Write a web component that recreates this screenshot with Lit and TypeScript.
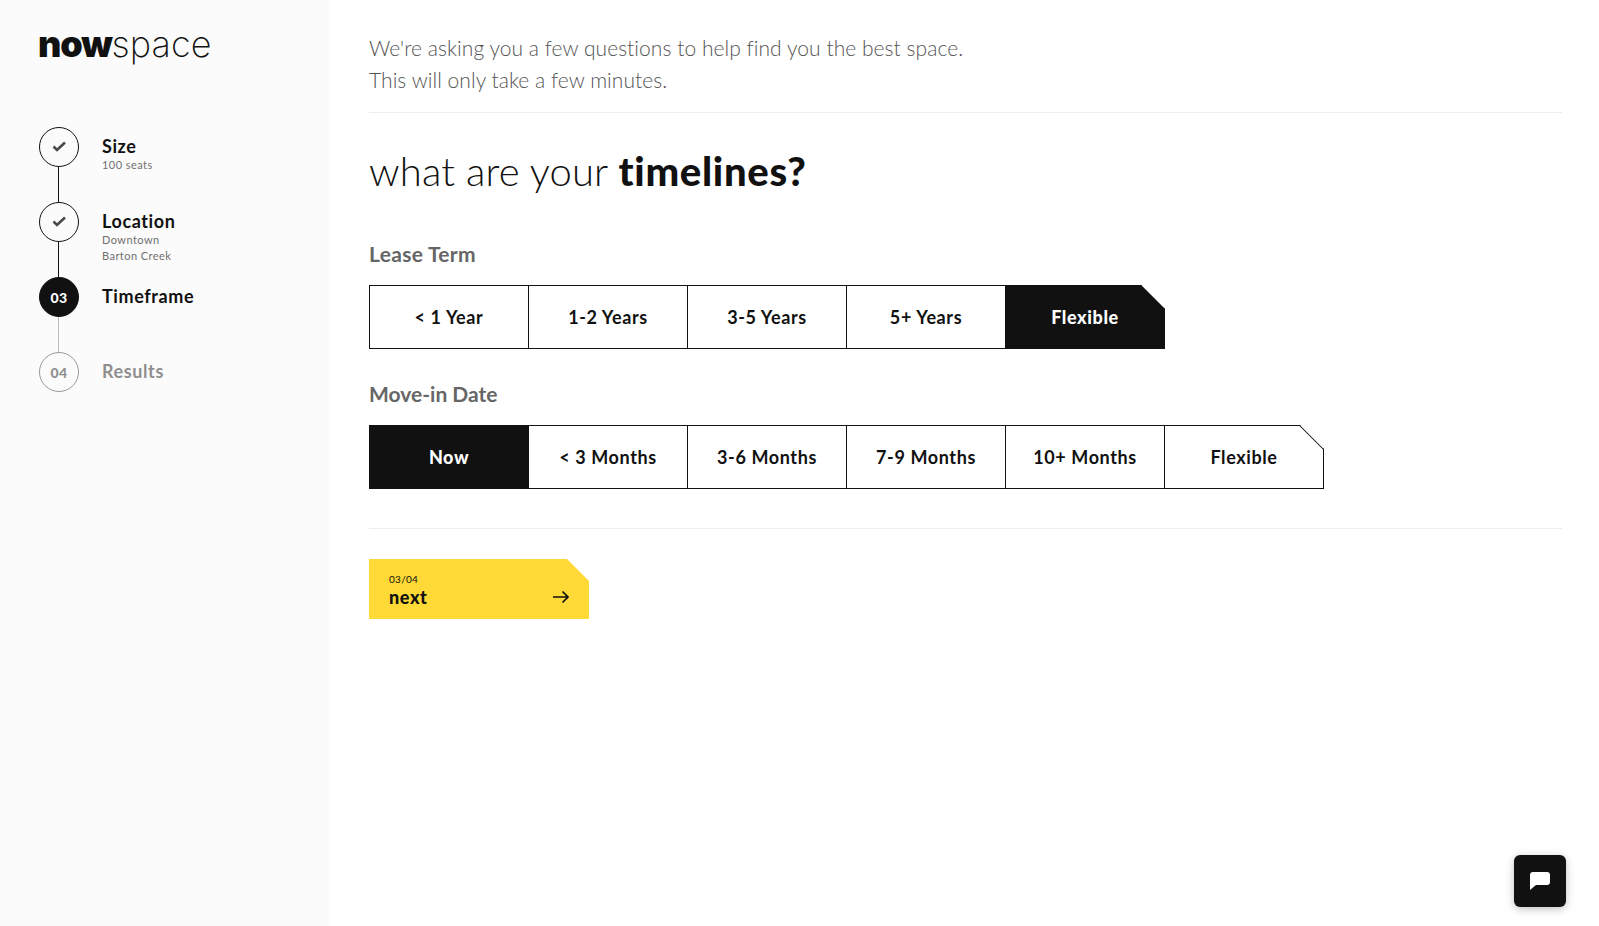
import { LitElement, html, css, svg } from 'lit';
import { customElement } from 'lit/decorators.js';
import { classMap } from 'lit/directives/class-map.js';

const lease = ['< 1 Year', '1-2 Years', '3-5 Years', '5+ Years', 'Flexible'];
const moveIn = ['Now', '< 3 Months', '3-6 Months', '7-9 Months', '10+ Months', 'Flexible'];

const check = svg`<path d="M4.500 9.500l3.500 3.500L16 5.500" fill="none" stroke="#4a4a4a" stroke-width="2.600"/>`;

@customElement('app-root')
export default class AppRoot extends LitElement {
  static override styles = css`
    :host {
      display: flex;
      height: 926px;
      overflow: hidden;
      background: #fff;
      color: #111;
      font-family: Lato, "Open Sans", sans-serif;
    }
    .sidebar {
      width: 329px;
      flex: none;
      box-sizing: border-box;
      background: #fbfbfb;
      padding: 21px 0 0 39px;
    }
    .logo {
      font-family: Inter, sans-serif;
      font-size: 36px;
      line-height: 46px;
      font-weight: 200;
      height: 46px;
      margin-left: -1px;
      letter-spacing: 0.1px;
      color: #111;
    }
    .logo b {
      font-weight: 900;
      letter-spacing: -1.200px;
    }
    .steps {
      margin-top: 60px;
    }
    .step {
      display: flex;
      height: 75px;
      gap: 23px;
      position: relative;
    }
    .step::before {
      content: '';
      position: absolute;
      left: 19px;
      top: 40px;
      height: 35px;
      width: 1px;
      background: #111;
    }
    .step.next::before {
      background: #bbb;
    }
    .step.last::before {
      display: none;
    }
    .dot {
      width: 40px;
      height: 40px;
      flex: none;
      box-sizing: border-box;
      border: 1px solid #111;
      border-radius: 50%;
      display: flex;
      align-items: center;
      justify-content: center;
      font-size: 14px;
      font-weight: 900;
      letter-spacing: 0.3px;
    }
    .dot svg {
      width: 20px;
      height: 20px;
    }
    .step.current .dot {
      background: #111;
      color: #fff;
    }
    .step.todo .dot {
      border-color: #999;
      color: #8f8f8f;
    }
    .step-title {
      font-size: 18px;
      line-height: 22px;
      font-weight: 700;
      margin-top: 8px;
      letter-spacing: 0.6px;
    }
    .step.todo .step-title {
      color: #8f8f8f;
    }
    .step-sub {
      font-size: 11px;
      line-height: 16px;
      color: #6f6f6f;
      letter-spacing: 0.45px;
    }
    .main {
      flex: 1;
      padding: 32px 37px 0 40px;
      min-width: 0;
    }
    .intro {
      font-size: 21px;
      line-height: 32px;
      font-weight: 300;
      color: #555;
      letter-spacing: 0.05px;
      padding-bottom: 16px;
      border-bottom: 1px solid #ececec;
    }
    h1 {
      margin: 32px 0 0;
      font-size: 40px;
      line-height: 52px;
      font-weight: 300;
      color: #111;
      letter-spacing: 0.15px;
    }
    h1 b {
      font-weight: 900;
      letter-spacing: 0.7px;
    }
    .label {
      margin-top: 43px;
      font-size: 21px;
      line-height: 28px;
      font-weight: 700;
      color: #666;
      letter-spacing: 0.3px;
    }
    .label.second {
      margin-top: 31px;
      letter-spacing: 0;
    }
    .options {
      display: flex;
      width: fit-content;
      margin-top: 17px;
      height: 64px;
      position: relative;
    }
    .opt {
      width: 159px;
      height: 64px;
      box-sizing: border-box;
      border: solid #111;
      border-width: 1px 1px 1px 0;
      display: flex;
      align-items: center;
      justify-content: center;
      font-size: 18px;
      font-weight: 700;
      background: #fff;
      letter-spacing: 0.6px;
    }
    .opt:first-child {
      width: 160px;
      border-left-width: 1px;
    }
    .opt.on {
      background: #111;
      color: #fff;
      font-weight: 900;
    }
    .opt.tip {
      clip-path: polygon(0 0, calc(100% - 24px) 0, 100% 24px, 100% 100%, 0 100%);
      position: relative;
    }
    .opt.tip::after {
      content: '';
      position: absolute;
      top: -1px;
      right: -1px;
      width: 34px;
      height: 1px;
      background: #111;
      transform-origin: right top;
      transform: translate(0, 24px) rotate(45deg);
    }
    .rule {
      height: 1px;
      background: #ececec;
      margin-top: 39px;
    }
    .next-btn {
      margin-top: 30px;
      width: 220px;
      height: 60px;
      box-sizing: border-box;
      padding: 14px 20px 0;
      background: #ffd935;
      clip-path: polygon(0 0, 198px 0, 100% 22px, 100% 100%, 0 100%);
    }
    .count {
      font-size: 10px;
      line-height: 13px;
      letter-spacing: 0.3px;
    }
    .next-row {
      display: flex;
      align-items: center;
      justify-content: space-between;
      font-size: 18px;
      line-height: 22px;
      font-weight: 900;
      letter-spacing: 0.6px;
    }
    .next-row svg {
      width: 16px;
      height: 14px;
    }
    .chat {
      position: absolute;
      left: 1514px;
      top: 855px;
      width: 52px;
      height: 52px;
      border-radius: 6px;
      background: #111;
      box-shadow: 0 2px 8px rgba(0, 0, 0, 0.25);
      display: flex;
      align-items: center;
      justify-content: center;
    }
    .chat svg {
      width: 22px;
      height: 22px;
    }
  `;

  private options(items: string[], active: string) {
    return html`<div class="options">
      ${items.map((t, i) => html`<div class=${classMap({ opt: true, on: t === active, tip: i === items.length - 1 })}>${t}</div>`)}
    </div>`;
  }

  override render() {
    return html`
      <aside class="sidebar">
        <div class="logo"><b>now</b>space</div>
        <div class="steps">
          <div class="step">
            <div class="dot"><svg viewBox="0 0 20 20">${check}</svg></div>
            <div><div class="step-title">Size</div><div class="step-sub">100 seats</div></div>
          </div>
          <div class="step">
            <div class="dot"><svg viewBox="0 0 20 20">${check}</svg></div>
            <div><div class="step-title">Location</div><div class="step-sub">Downtown<br />Barton Creek</div></div>
          </div>
          <div class="step current next">
            <div class="dot">03</div>
            <div><div class="step-title">Timeframe</div></div>
          </div>
          <div class="step todo last">
            <div class="dot">04</div>
            <div><div class="step-title">Results</div></div>
          </div>
        </div>
      </aside>
      <main class="main">
        <div class="intro">We're asking you a few questions to help find you the best space.<br />This will only take a few minutes.</div>
        <h1>what are your <b>timelines?</b></h1>
        <div class="label">Lease Term</div>
        ${this.options(lease, 'Flexible')}
        <div class="label second">Move-in Date</div>
        ${this.options(moveIn, 'Now')}
        <div class="rule"></div>
        <div class="next-btn">
          <div class="count">03/04</div>
          <div class="next-row">next
            <svg viewBox="0 0 16 14"><path d="M0 7h15M9.500 1.500L15 7l-5.500 5.500" fill="none" stroke="#111" stroke-width="1.700"/></svg>
          </div>
        </div>
      </main>
      <div class="chat">
        <svg viewBox="0 0 22 22"><path d="M4 2h14a3 3 0 0 1 3 3v7a3 3 0 0 1-3 3H7l-6 5V5a3 3 0 0 1 3-3z" fill="#fff"/></svg>
      </div>
    `;
  }
}
